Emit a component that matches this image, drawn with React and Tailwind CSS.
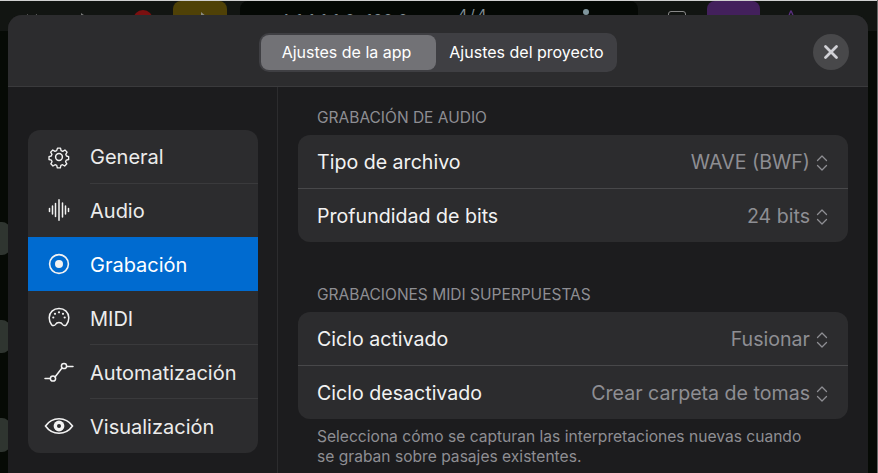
import React from "react";

const F = { fontFamily: '"Inter", "Liberation Sans", sans-serif' };

const Gear = () => (
  <svg width="24" height="24" viewBox="0 0 24 24" fill="none" stroke="currentColor" strokeWidth="1.5" strokeLinejoin="round">
    <path d="M10.3 2.2h3.4l.6 2.7 1.9.8 2.4-1.5 2.4 2.4-1.5 2.4.8 1.9 2.4.6v3.3l-2.6.6-.8 1.9 1.4 2.3-2.4 2.4-2.3-1.4-1.9.8-.6 2.6h-3.4l-.6-2.6-1.9-.8-2.3 1.4-2.4-2.4 1.4-2.3-.8-1.9-2.6-.6v-3.3l2.5-.6.8-1.9-1.5-2.4 2.4-2.4 2.4 1.5 1.9-.8z" transform="translate(1.2 1.2) scale(.9)" />
    <circle cx="12" cy="12" r="3.4" />
  </svg>
);
const Wave = () => (
  <svg width="24" height="24" viewBox="0 0 24 24" fill="none" stroke="currentColor" strokeWidth="1.5" strokeLinecap="round">
    <path d="M2.500 10.500v3M5.500 8v8M8.500 5.500v13M12 1.800v20.400M15.500 5v14M18.500 8v8M21.500 10.500v3" />
  </svg>
);
const Radio = () => (
  <svg width="24" height="24" viewBox="0 0 24 24" fill="none">
    <circle cx="12" cy="12" r="9.400" stroke="currentColor" strokeWidth="1.600" />
    <circle cx="12" cy="12" r="4" fill="currentColor" />
  </svg>
);
const Midi = () => (
  <svg width="24" height="24" viewBox="0 0 24 24" fill="none" stroke="currentColor" strokeWidth="1.500" strokeLinejoin="round">
    <path d="M12 2.500c5.600 0 9.800 4 9.800 9.200 0 2.600-.9 5-2.400 7-1 1.300-3 1.200-3.800-.2-.7-1.300-2-2-3.600-2s-2.900.7-3.600 2c-.8 1.400-2.800 1.500-3.800.2-1.500-2-2.400-4.400-2.400-7C2.200 6.500 6.400 2.500 12 2.500z" />
    <g fill="currentColor" stroke="none">
      <circle cx="6.300" cy="11.500" r="1.100" />
      <circle cx="8" cy="7.800" r="1.100" />
      <circle cx="12" cy="6.300" r="1.100" />
      <circle cx="16" cy="7.800" r="1.100" />
      <circle cx="17.700" cy="11.500" r="1.100" />
    </g>
  </svg>
);
const Auto = () => (
  <svg width="30" height="24" viewBox="0 0 30 24" fill="none" stroke="currentColor" strokeWidth="1.500">
    <path d="M1 18.500h5M11 17l7-9M23 6.500h6" strokeLinecap="round" />
    <circle cx="9" cy="18.500" r="2.600" />
    <circle cx="20" cy="6" r="2.600" />
  </svg>
);
const Eye = () => (
  <svg width="30" height="24" viewBox="0 0 30 24" fill="none">
    <path d="M1.500 12C4.800 7.300 9.500 4.800 15 4.800S25.200 7.300 28.500 12c-3.300 4.700-8 7.200-13.500 7.200S4.800 16.700 1.500 12z" stroke="currentColor" strokeWidth="1.600" />
    <circle cx="15" cy="12" r="5.400" fill="currentColor" />
    <circle cx="15" cy="12" r="2" fill="#2c2c2e" />
  </svg>
);
const Chevrons = () => (
  <svg width="14" height="18" viewBox="0 0 14 18" fill="none" stroke="#8e8e93" strokeWidth="1.300" strokeLinecap="round" strokeLinejoin="round" className="shrink-0">
    <path d="M2.500 6.500 7 2l4.500 4.500M2.500 11.500 7 16l4.500-4.500" />
  </svg>
);

const SkipBack = () => (
  <svg width="18" height="18" viewBox="0 0 18 18" fill="#7a7a7a"><path d="M0 9 6 14V4zM8 9l7 5V4z" /></svg>
);
const Play = () => (
  <svg width="12" height="18" viewBox="0 0 12 18" fill="#7a7a7a"><path d="M1 3l10 7-10 7z" /></svg>
);
const Arrow = () => (
  <svg width="16" height="16" viewBox="0 0 16 16" fill="#8a8a80"><path d="M0 11h9V7h7v8H0z" /><path d="M9 2l6 5H9z" /></svg>
);
const Peak = () => (
  <svg width="14" height="16" viewBox="0 0 14 16" fill="none" stroke="#5a2f80" strokeWidth="1.300"><path d="M1 15C4 12 5 3 7 1c2 2 3 11 6 14" /></svg>
);

const nav = [
  { label: "General", icon: <Gear />, h: "h-[53.5px]" },
  { label: "Audio", icon: <Wave />, h: "h-[53.5px]", noLine: true },
  { label: "Grabación", icon: <Radio />, active: true, h: "h-[54px]", noLine: true },
  { label: "MIDI", icon: <Midi />, h: "h-[54px]" },
  { label: "Automatización", icon: <Auto />, h: "h-[54px]" },
  { label: "Visualización", icon: <Eye />, h: "h-[54px]", noLine: true },
];

function NavRow({ item }) {
  return (
    <div className={`flex items-center ${item.h} ${item.active ? "bg-[#006bd0]" : ""}`}>
      <div className="flex w-[62px] shrink-0 justify-center text-[#f2f2f2]">{item.icon}</div>
      <div className={`flex h-full flex-1 items-center pt-[2px] text-[20px] ${item.active ? "text-white" : "text-[#ececec]"} ${item.noLine ? "" : "border-b border-[#3a3a3c]"}`}>
        {item.label}
      </div>
    </div>
  );
}

function Row({ label, value, last }) {
  return (
    <div className={`flex h-[53.5px] items-center justify-between px-[19px] pt-[3px] ${last ? "" : "border-b border-[#48484a]"}`}>
      <span className="text-[19.6px] text-[#f2f2f2]">{label}</span>
      <span className="flex items-center gap-[5px] text-[19.6px] text-[#8e8e93]">
        {value}
        <Chevrons />
      </span>
    </div>
  );
}

export default function App() {
  return (
    <div style={F} className="relative h-[473px] w-[878px] overflow-hidden bg-[#060a05]">
      <div className="h-px bg-[#d0d0d0]" />
      <div className="flex h-[30px] items-start bg-[#121512] pl-[22px] pr-[80px]">
        <div className="flex items-start pt-[9px]">
          <SkipBack />
          <div className="ml-[40px]"><Play /></div>
          <div className="ml-[41px] h-[20px] w-[20px] rounded-full bg-[#7a1010]" />
        </div>
        <div className="ml-[20px] flex h-[24px] w-[54px] justify-center rounded-lg bg-[#4f4107] pt-[9px]">
          <Arrow />
        </div>
        <div className="ml-[13px] flex h-[30px] w-[398px] items-start gap-[12px] rounded-lg bg-[#040804] pl-[40px] text-[15px] tracking-[1px] text-[#7f8c92]">
          <span className="pt-[8px]">4 1 1 1 1 0 &nbsp;120.0</span>
          <span className="pl-[37px] pt-[3px] tracking-[2px]">4/4</span>
          <span className="ml-[82px] mt-[8px] h-[6px] w-[6px] rounded-full bg-[#7f959c]" />
        </div>
        <div className="ml-[30px] mt-[10px] h-[14px] w-[18px] rounded-[3px] border border-[#888]" />
        <div className="ml-[21px] h-[24px] w-[53px] rounded-lg bg-[#43205c]" />
        <div className="ml-[24px] pt-[9px]"><Peak /></div>
      </div>
      <div className="flex flex-col gap-[65px] pt-[191px]">
        <div className="h-[33px] w-[10px] rounded-r-lg bg-[#2f3530]" />
        <div className="h-[33px] w-[10px] rounded-r-lg bg-[#2f3530]" />
        <div className="h-[34px] w-[10px] rounded-r-lg bg-[#2f3530]" />
      </div>
      <div className="absolute right-0 top-0 h-full w-px bg-[#6a6a6a]" />

      <div className="absolute left-[8px] top-[15px] h-[470px] w-[860px] rounded-t-[14px] bg-[#1c1c1e]">
        <header className="relative flex h-[72px] items-center justify-center rounded-t-[14px] border-b border-[#3a3a3c] bg-[#2c2c2e]">
          <div className="mt-[3px] flex h-[39px] w-[358px] items-center rounded-[10px] bg-[#3f3f43] p-[2px] text-[16px] text-white">
            <div className="flex h-[35px] w-[175px] items-center justify-center rounded-[8px] bg-[#727276] pr-[4px]">Ajustes de la app</div>
            <div className="flex flex-1 items-center justify-center pl-[2px]">Ajustes del proyecto</div>
          </div>
          <div className="absolute right-[19px] top-[19px] flex h-[36px] w-[36px] items-center justify-center rounded-full bg-[#48484a]">
            <svg width="16" height="16" viewBox="0 0 16 16" stroke="#d1d1d6" strokeWidth="2.800" strokeLinecap="round">
              <path d="M2.500 2.500l11 11M13.500 2.500l-11 11" />
            </svg>
          </div>
        </header>

        <div className="flex">
          <aside className="h-[400px] w-[270px] shrink-0 border-r border-[#2c2c2e] pl-[20px] pt-[43px]">
            <div className="w-[230px] overflow-hidden rounded-[12px] bg-[#2c2c2e]">
              {nav.map((item) => (
                <NavRow key={item.label} item={item} />
              ))}
            </div>
          </aside>

          <main className="w-[550px] pl-[20px]">
            <div className="flex h-[48px] items-end pb-[6px] pl-[19px] text-[15.5px] uppercase text-[#8e8e93]">Grabación de audio</div>
            <section className="w-[550px] rounded-[12px] bg-[#2c2c2e]">
              <Row label="Tipo de archivo" value="WAVE (BWF)" />
              <Row label="Profundidad de bits" value="24 bits" last />
            </section>
            <div className="flex h-[70px] items-end pb-[6px] pl-[19px] text-[15.5px] uppercase text-[#8e8e93]">Grabaciones MIDI superpuestas</div>
            <section className="w-[550px] rounded-[12px] bg-[#2c2c2e]">
              <Row label="Ciclo activado" value="Fusionar" />
              <Row label="Ciclo desactivado" value="Crear carpeta de tomas" last />
            </section>
            <p className="mt-[8px] pl-[19px] text-[15.6px] leading-[20px] text-[#8e8e93]">
              Selecciona cómo se capturan las interpretaciones nuevas cuando
              <br />
              se graban sobre pasajes existentes.
            </p>
          </main>
        </div>
      </div>
    </div>
  );
}
